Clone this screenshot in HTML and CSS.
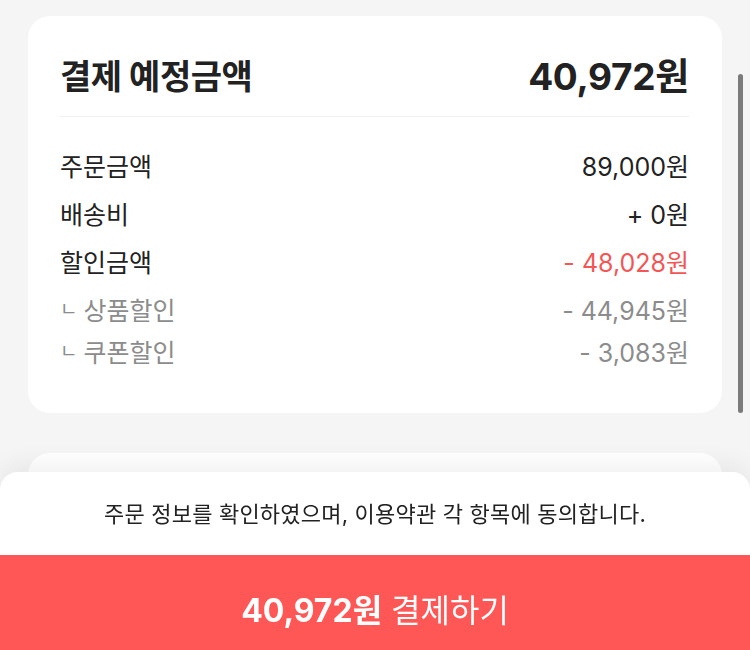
FILE: index.html
```html
<!DOCTYPE html>
<html lang="ko">
<head>
  <meta charset="UTF-8">
  <title>결제</title>
  <link rel="stylesheet" href="styles.css">
</head>
<body>
  <div class="page">
    <section class="card summary">
      <div class="summary-head">
        <h2>결제 예정금액</h2>
        <strong class="total">40,972원</strong>
      </div>
      <ul class="rows">
        <li><span>주문금액</span><span>89,000원</span></li>
        <li><span>배송비</span><span>+ 0원</span></li>
        <li class="discount"><span>할인금액</span><span>- 48,028원</span></li>
        <li class="sub first"><span><i>ㄴ</i>상품할인</span><span>- 44,945원</span></li>
        <li class="sub"><span><i>ㄴ</i>쿠폰할인</span><span>- 3,083원</span></li>
      </ul>
    </section>
    <section class="card next"></section>
  </div>

  <div class="scrollbar"></div>

  <div class="checkout">
    <p class="agree">주문 정보를 확인하였으며, 이용약관 각 항목에 동의합니다.</p>
    <button class="pay"><b>40,972원</b> 결제하기</button>
  </div>
</body>
</html>
```

FILE: styles.css
```css
body {
  margin: 0;
  background: #f5f5f5;
  font-family: Inter, "Noto Sans CJK KR", sans-serif;
  color: #222;
  overflow: hidden;
}
.page {
  padding: 16px 28px 0;
}
.card {
  background: #fff;
  border-radius: 22px;
}
.summary {
  padding: 0 33px 41px 32px;
}
.summary-head {
  display: flex;
  justify-content: space-between;
  align-items: center;
  height: 40px;
  padding: 38px 0 22px;
  border-bottom: 1px solid #efefef;
}
.summary-head h2 {
  margin: 0;
  font-size: 34px;
  font-weight: 700;
  letter-spacing: -0.5px;
}
.total {
  font-size: 37px;
  font-weight: 700;
  letter-spacing: -0.3px;
}
.rows {
  list-style: none;
  margin: 0;
  padding: 24px 0 0;
}
.rows li {
  display: flex;
  justify-content: space-between;
  align-items: center;
  height: 48px;
  font-size: 25px;
}
.rows li.discount span:last-child {
  color: #f25656;
}
.rows li.sub {
  height: 42px;
  color: #8c8c8c;
}
.rows li.first {
  margin-top: 3px;
}
.rows li.sub i {
  font-style: normal;
  font-size: 19px;
  margin: 0 6px 0 0;
  vertical-align: 4px;
}
.next {
  margin-top: 40px;
  height: 220px;
}
.scrollbar {
  position: fixed;
  right: 7px;
  top: 74px;
  width: 5px;
  height: 339px;
  border-radius: 3px;
  background: #7b7b7b;
}
.checkout {
  position: fixed;
  left: 0;
  right: 0;
  bottom: 0;
  background: #fff;
  border-radius: 18px 18px 0 0;
  box-shadow: 0 -8px 24px rgba(0, 0, 0, 0.06);
}
.agree {
  margin: 0;
  height: 83px;
  line-height: 84px;
  text-align: center;
  font-size: 22px;
  letter-spacing: 0.2px;
  color: #222;
}
.pay {
  display: block;
  width: 100%;
  height: 95px;
  padding: 10px 0 0;
  border: none;
  background: #ff5656;
  color: #fff;
  font-family: Inter, "Noto Sans CJK KR", sans-serif;
  font-size: 32px;
}
.pay b {
  font-weight: 700;
}
```
